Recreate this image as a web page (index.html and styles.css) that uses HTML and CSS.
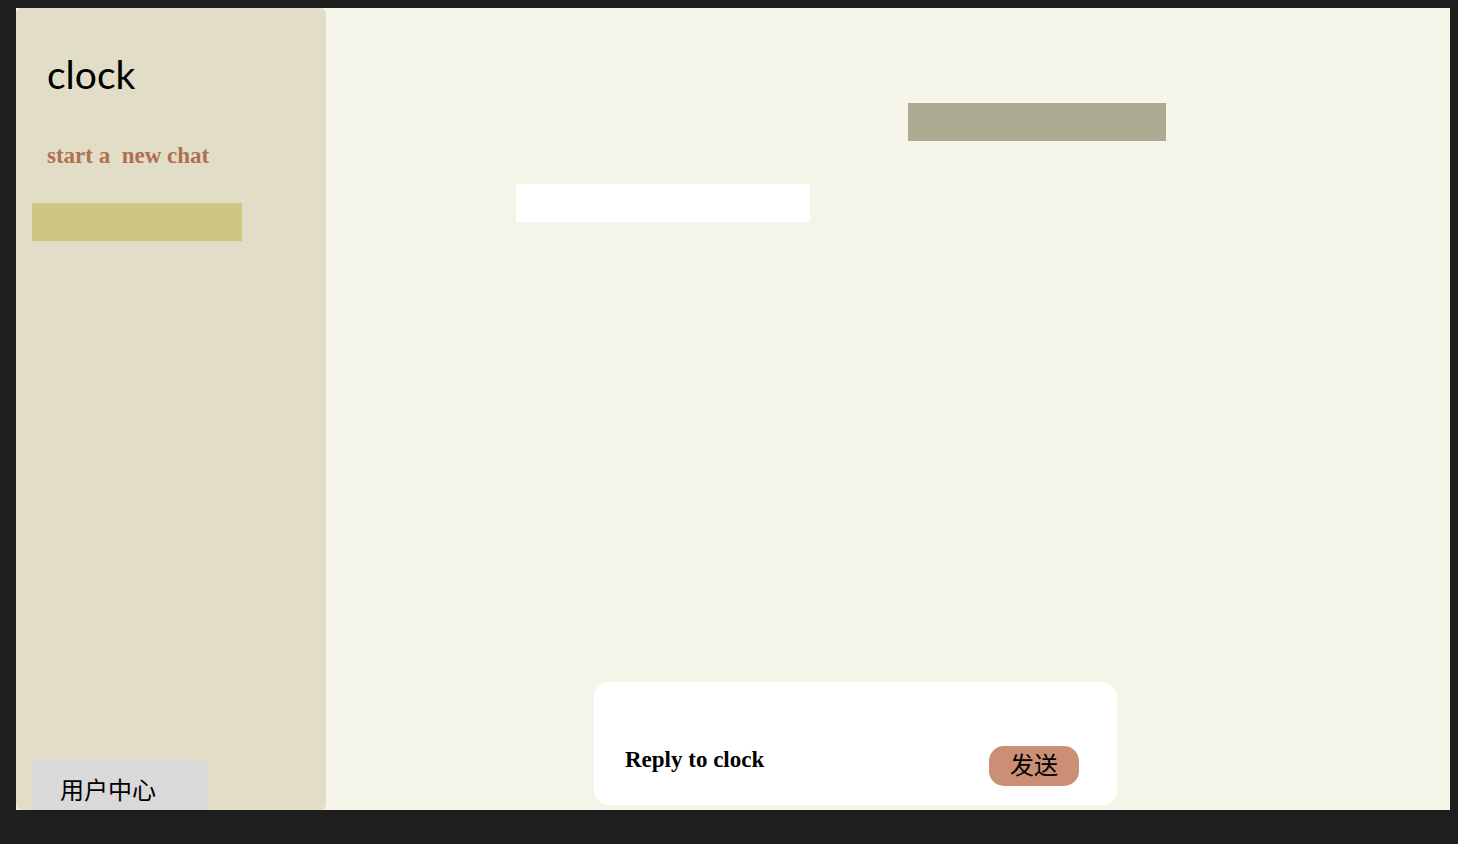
FILE: index.html
```html
<!DOCTYPE html>
<html lang="zh-CN">
<head>
<meta charset="utf-8">
<meta name="viewport" content="width=device-width, initial-scale=1">
<title>clock</title>
<link rel="stylesheet" href="styles.css">
</head>
<body class="page">
<div class="app">
  <aside class="sidebar">
    <h1 class="brand">clock</h1>
    <button class="new-chat" type="button">start a  new chat</button>
    <div class="chat-item"></div>
    <button class="account" type="button">用户中心</button>
  </aside>
  <main class="chat">
    <div class="messages">
      <div class="message message-sent"></div>
      <div class="message message-received"></div>
    </div>
    <form class="composer">
      <input class="composer-input" type="text" placeholder="Reply to clock" aria-label="Reply to clock">
      <button class="send" type="button">发送</button>
    </form>
  </main>
</div>
</body>
</html>
```

FILE: styles.css
```css
* {
  box-sizing: border-box;
}

.page {
  margin: 0;
  min-height: 100vh;
  padding: 8px 8px 34px 16px;
  display: flex;
  background: #1e1e1e;
  font-family: "Liberation Serif", "Noto Sans CJK SC", serif;
  color: #000;
}

.app {
  flex: 1;
  display: flex;
  background: #f4f4e8;
}

button {
  border: 0;
  padding: 0;
  background: none;
  color: inherit;
  font: inherit;
  cursor: pointer;
}

.sidebar {
  flex: 0 0 310px;
  display: flex;
  flex-direction: column;
  align-items: flex-start;
  padding: 44px 16px 0;
  border-radius: 6px;
  background: #e2ddc7;
}

.brand {
  margin: 0 0 0 15px;
  font: 400 39px/44px Lato, sans-serif;
}

.new-chat {
  margin: 46px 0 0 15px;
  color: #b07050;
  font-size: 23px;
  font-weight: 700;
  line-height: 28px;
  white-space: pre;
}

.chat-item {
  width: 210px;
  height: 38px;
  margin-top: 33px;
  background: #cfc681;
}

.account {
  width: 175px;
  height: 50px;
  margin-top: auto;
  padding: 12px 0 0 28px;
  background: #d9d9d9;
  font-size: 24px;
  line-height: 36px;
  text-align: left;
}

.chat {
  flex: 1;
  min-width: 0;
  display: flex;
  flex-direction: column;
  padding: 95px 284px 5px 190px;
}

.messages {
  flex: 1;
  display: flex;
  flex-direction: column;
  gap: 43px;
}

.message {
  height: 38px;
}

.message-sent {
  width: 258px;
  align-self: flex-end;
  background: #acaa90;
}

.message-received {
  width: 294px;
  background: #fff;
}

.composer {
  display: flex;
  align-items: center;
  gap: 16px;
  margin: 0 49px 0 78px;
  padding: 64px 38px 19px 31px;
  border-radius: 15px;
  background: #fff;
}

.composer-input {
  flex: 1;
  min-width: 0;
  height: 28px;
  margin-bottom: 12px;
  padding: 0;
  border: 0;
  outline: 0;
  background: none;
  color: #000;
  font: 700 23px/28px "Liberation Serif", serif;
}

.composer-input::placeholder {
  color: #000;
  opacity: 1;
}

.send {
  width: 90px;
  height: 40px;
  border-radius: 15px;
  background: #ca8f75;
  font-size: 24px;
  line-height: 40px;
}
```
